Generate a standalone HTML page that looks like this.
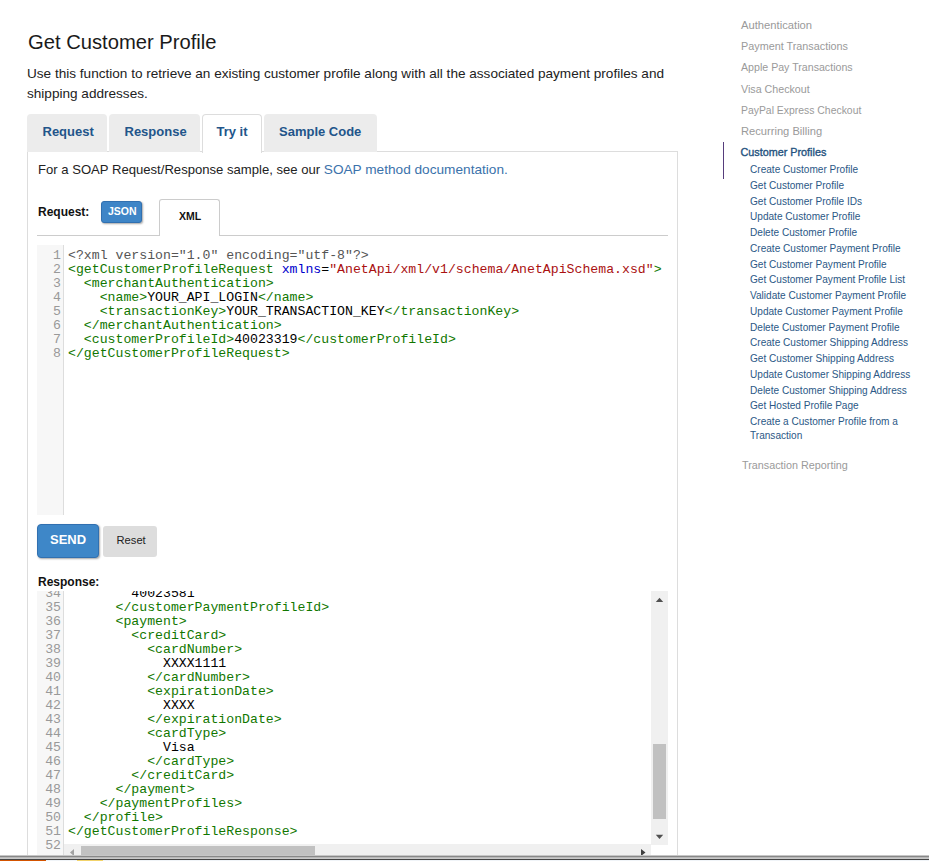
<!DOCTYPE html>
<html><head><meta charset="utf-8">
<style>
html,body{margin:0;padding:0;background:#fff;}
body{width:929px;height:861px;overflow:hidden;position:relative;font-family:"Liberation Sans",sans-serif;color:#111;}
.abs{position:absolute;white-space:nowrap;line-height:14px;}
#title{left:28px;top:30px;font-size:20.2px;line-height:24px;color:#1a1a1a;}
#para{left:27px;top:63.5px;font-size:13.58px;line-height:20.5px;color:#222;white-space:normal;width:650px;}
.tab{position:absolute;top:114px;height:38px;background:#ececec;border-radius:4px 4px 0 0;}
.tab.active{background:#fff;border:1px solid #ddd;border-bottom:none;box-sizing:border-box;height:39px;}
.tabt{position:absolute;top:125px;font-weight:bold;font-size:13px;color:#22558a;line-height:14px;white-space:nowrap;}
#panel{position:absolute;left:27px;top:151px;width:649px;height:760px;border:1px solid #ddd;background:#fff;}
#soap{left:38px;top:162.7px;font-size:13.1px;color:#222;}
#soap a{color:#3b72ab;text-decoration:none;font-size:13.65px;}
#reqlbl{left:38px;top:204.6px;font-size:12px;font-weight:bold;color:#111;}
#json{position:absolute;left:101px;top:201px;width:41px;height:22px;box-sizing:border-box;border:1px solid #3170b0;background:#3e85c7;border-radius:3px;box-shadow:1px 1px 2px rgba(0,0,0,.35);}
#jsont{left:108px;top:204px;color:#fff;font-weight:bold;font-size:10.5px;}
#xmltab{position:absolute;left:159px;top:199px;width:61px;height:37px;box-sizing:border-box;border:1px solid #ccc;border-bottom:none;border-radius:3px 3px 0 0;background:#fff;}
#xmlt{left:179px;top:209px;font-size:10.5px;font-weight:bold;color:#111;}
#hr{position:absolute;left:37px;top:235px;width:631px;height:1px;background:#ccc;}
.cm{position:absolute;left:37px;background:#fff;overflow:hidden;font-family:"Liberation Mono",monospace;font-size:13.2px;line-height:14px;}
.gut{position:absolute;left:0;top:0;bottom:0;width:26px;background:#f7f7f7;border-right:1px solid #ddd;}
.lines{position:absolute;left:0;top:4px;}
.ln{height:14px;white-space:pre;position:relative;}
.ln .n{position:absolute;left:0;width:24px;text-align:right;color:#999;}
.ln .c{position:absolute;left:31px;color:#000;}
.tg{color:#170;} .at{color:#00c;} .st{color:#a11;} .mt{color:#555;}
#send{position:absolute;left:37px;top:524px;width:62px;height:34px;box-sizing:border-box;border:1px solid #3170b0;background:#3e87c8;border-radius:4px;box-shadow:1px 1px 2px rgba(0,0,0,.35);}
#sendt{left:50px;top:533.2px;color:#fff;font-weight:bold;font-size:13px;}
#reset{position:absolute;left:103px;top:526px;width:54px;height:31px;background:#ddd;border-radius:3px;}
#resett{left:116.5px;top:532.9px;color:#222;font-size:11.2px;}
#resplbl{left:38px;top:575.4px;font-size:12px;font-weight:bold;color:#111;}
.vs{position:absolute;left:614px;top:0;width:17px;height:254px;background:#f0f0f0;}
.vthumb{position:absolute;left:2px;top:153px;width:13px;height:75px;background:#c1c1c1;}
.hs{position:absolute;left:27px;top:253px;width:587px;height:11px;background:#f0f0f0;}
.hthumb{position:absolute;left:17px;top:2px;width:234px;height:9px;background:#c1c1c1;}
/* sidebar */
.nav{position:absolute;left:741px;font-size:11.15px;color:#9a9a9a;line-height:14px;white-space:nowrap;}
.nav.on{color:#24527e;left:740.5px;font-size:10.8px;-webkit-text-stroke:0.35px #24527e;}
.sub{position:absolute;left:750px;font-size:10.08px;color:#2b5886;line-height:14px;white-space:nowrap;}
#purple{position:absolute;left:723px;top:142px;width:1px;height:37px;background:#563d7c;}
.bb{position:absolute;left:0;width:929px;height:1px;}
</style></head><body>
<div id="title" class="abs">Get Customer Profile</div>
<div id="para" class="abs">Use this function to retrieve an existing customer profile along with all the associated payment profiles and shipping addresses.</div>

<div id="panel"></div>
<div class="tab" style="left:27px;width:80px;"></div>
<div class="tab" style="left:109px;width:91px;"></div>
<div class="tab active" style="left:202px;width:60px;"></div>
<div class="tab" style="left:264px;width:113px;"></div>
<div class="tabt" style="left:42.5px;">Request</div>
<div class="tabt" style="left:124.5px;">Response</div>
<div class="tabt" style="left:216.5px;">Try it</div>
<div class="tabt" style="left:279px;">Sample Code</div>

<div id="soap" class="abs">For a SOAP Request/Response sample, see our <a>SOAP method documentation.</a></div>
<div id="reqlbl" class="abs">Request:</div>
<div id="json"></div>
<div id="jsont" class="abs">JSON</div>
<div id="hr"></div>
<div id="xmltab"></div>
<div id="xmlt" class="abs">XML</div>

<div class="cm" style="top:245px;width:630px;height:270px;">
<div class="gut"></div>
<div class="lines">
<div class="ln"><span class="n">1</span><span class="c"><span class="mt">&lt;?xml version="1.0" encoding="utf-8"?&gt;</span></span></div>
<div class="ln"><span class="n">2</span><span class="c"><span class="tg">&lt;getCustomerProfileRequest</span> <span class="at">xmlns</span>=<span class="st">"AnetApi/xml/v1/schema/AnetApiSchema.xsd"</span><span class="tg">&gt;</span></span></div>
<div class="ln"><span class="n">3</span><span class="c">  <span class="tg">&lt;merchantAuthentication&gt;</span></span></div>
<div class="ln"><span class="n">4</span><span class="c">    <span class="tg">&lt;name&gt;</span>YOUR_API_LOGIN<span class="tg">&lt;/name&gt;</span></span></div>
<div class="ln"><span class="n">5</span><span class="c">    <span class="tg">&lt;transactionKey&gt;</span>YOUR_TRANSACTION_KEY<span class="tg">&lt;/transactionKey&gt;</span></span></div>
<div class="ln"><span class="n">6</span><span class="c">  <span class="tg">&lt;/merchantAuthentication&gt;</span></span></div>
<div class="ln"><span class="n">7</span><span class="c">  <span class="tg">&lt;customerProfileId&gt;</span>40023319<span class="tg">&lt;/customerProfileId&gt;</span></span></div>
<div class="ln"><span class="n">8</span><span class="c"><span class="tg">&lt;/getCustomerProfileRequest&gt;</span></span></div>
</div>
</div>

<div id="send"></div>
<div id="sendt" class="abs">SEND</div>
<div id="reset"></div>
<div id="resett" class="abs">Reset</div>
<div id="resplbl" class="abs">Response:</div>

<div class="cm" style="top:591px;width:631px;height:264px;">
<div class="lines" style="top:-4px;">
<div class="ln"><span class="c">        40023581</span></div>
<div class="ln"><span class="c">      <span class="tg">&lt;/customerPaymentProfileId&gt;</span></span></div>
<div class="ln"><span class="c">      <span class="tg">&lt;payment&gt;</span></span></div>
<div class="ln"><span class="c">        <span class="tg">&lt;creditCard&gt;</span></span></div>
<div class="ln"><span class="c">          <span class="tg">&lt;cardNumber&gt;</span></span></div>
<div class="ln"><span class="c">            XXXX1111</span></div>
<div class="ln"><span class="c">          <span class="tg">&lt;/cardNumber&gt;</span></span></div>
<div class="ln"><span class="c">          <span class="tg">&lt;expirationDate&gt;</span></span></div>
<div class="ln"><span class="c">            XXXX</span></div>
<div class="ln"><span class="c">          <span class="tg">&lt;/expirationDate&gt;</span></span></div>
<div class="ln"><span class="c">          <span class="tg">&lt;cardType&gt;</span></span></div>
<div class="ln"><span class="c">            Visa</span></div>
<div class="ln"><span class="c">          <span class="tg">&lt;/cardType&gt;</span></span></div>
<div class="ln"><span class="c">        <span class="tg">&lt;/creditCard&gt;</span></span></div>
<div class="ln"><span class="c">      <span class="tg">&lt;/payment&gt;</span></span></div>
<div class="ln"><span class="c">    <span class="tg">&lt;/paymentProfiles&gt;</span></span></div>
<div class="ln"><span class="c">  <span class="tg">&lt;/profile&gt;</span></span></div>
<div class="ln"><span class="c"><span class="tg">&lt;/getCustomerProfileResponse&gt;</span></span></div>
<div class="ln"><span class="c"></span></div>
</div>
<div class="gut"></div>
<div class="lines" style="top:-4px;">
<div class="ln"><span class="n">34</span></div><div class="ln"><span class="n">35</span></div><div class="ln"><span class="n">36</span></div><div class="ln"><span class="n">37</span></div><div class="ln"><span class="n">38</span></div><div class="ln"><span class="n">39</span></div><div class="ln"><span class="n">40</span></div><div class="ln"><span class="n">41</span></div><div class="ln"><span class="n">42</span></div><div class="ln"><span class="n">43</span></div><div class="ln"><span class="n">44</span></div><div class="ln"><span class="n">45</span></div><div class="ln"><span class="n">46</span></div><div class="ln"><span class="n">47</span></div><div class="ln"><span class="n">48</span></div><div class="ln"><span class="n">49</span></div><div class="ln"><span class="n">50</span></div><div class="ln"><span class="n">51</span></div><div class="ln"><span class="n">52</span></div>
</div>
<div class="vs">
<svg style="position:absolute;left:0;top:0" width="17" height="254"><path d="M4.8 11 L8.5 6.8 L12.2 11 Z" fill="#505050"/><path d="M4.8 243.8 L8.5 248 L12.2 243.8 Z" fill="#505050"/></svg>
<div class="vthumb"></div>
</div>
<div class="hs">
<svg style="position:absolute;left:0;top:0" width="587" height="11"><path d="M10 5 L6 8.5 L10 12 Z" fill="#a3a3a3"/><path d="M577 5 L581.5 8.5 L577 12 Z" fill="#404040"/></svg>
<div class="hthumb"></div>
</div>
</div>

<div class="bb" style="top:855px;background:#c6c6c6"></div><div class="bb" style="top:856px;background:#888"></div><div class="bb" style="top:857px;background:#b8b8b8"></div><div class="bb" style="top:858px;background:#c9c9c9"></div><div class="bb" style="top:859px;background:#444"></div><div class="bb" style="top:860px;background:#f0f4f8"></div>
<div style="position:absolute;left:0;top:860px;width:46px;height:1px;background:#d35400;"></div>
<div style="position:absolute;left:77px;top:860px;width:26px;height:1px;background:#f2d36b;"></div>

<!-- sidebar -->
<div class="nav" style="top:18px;font-size:11.22px;">Authentication</div>
<div class="nav" style="top:38.6px;font-size:10.82px;">Payment Transactions</div>
<div class="nav" style="top:60px;font-size:10.63px;">Apple Pay Transactions</div>
<div class="nav" style="top:81.7px;font-size:10.7px;">Visa Checkout</div>
<div class="nav" style="top:104px;font-size:10.42px;">PayPal Express Checkout</div>
<div class="nav" style="top:124px;font-size:11.15px;">Recurring Billing</div>
<div id="purple"></div>
<div class="nav on" style="top:144.7px;">Customer Profiles</div>
<div class="sub" style="top:163px;">Create Customer Profile</div>
<div class="sub" style="top:179px;">Get Customer Profile</div>
<div class="sub" style="top:195px;">Get Customer Profile IDs</div>
<div class="sub" style="top:210px;">Update Customer Profile</div>
<div class="sub" style="top:226px;">Delete Customer Profile</div>
<div class="sub" style="top:242px;">Create Customer Payment Profile</div>
<div class="sub" style="top:258px;">Get Customer Payment Profile</div>
<div class="sub" style="top:273px;">Get Customer Payment Profile List</div>
<div class="sub" style="top:289px;">Validate Customer Payment Profile</div>
<div class="sub" style="top:305px;">Update Customer Payment Profile</div>
<div class="sub" style="top:321px;">Delete Customer Payment Profile</div>
<div class="sub" style="top:336px;">Create Customer Shipping Address</div>
<div class="sub" style="top:352px;">Get Customer Shipping Address</div>
<div class="sub" style="top:368px;">Update Customer Shipping Address</div>
<div class="sub" style="top:384px;">Delete Customer Shipping Address</div>
<div class="sub" style="top:399px;">Get Hosted Profile Page</div>
<div class="sub" style="top:415px;">Create a Customer Profile from a</div>
<div class="sub" style="top:429px;">Transaction</div>
<div class="nav" style="top:458px;left:742px;font-size:10.8px;">Transaction Reporting</div>
</body></html>
